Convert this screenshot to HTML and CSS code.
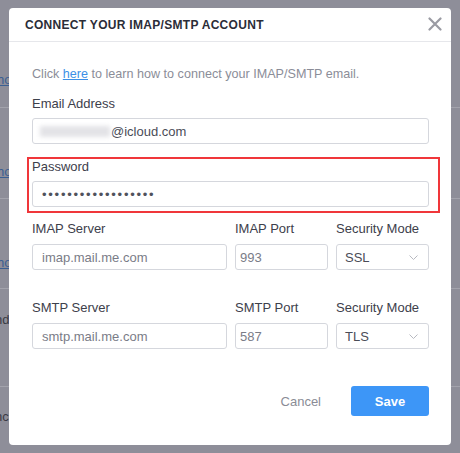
FILE: index.html
```html
<!DOCTYPE html>
<html>
<head>
<meta charset="utf-8">
<link rel="stylesheet" href="styles.css">
</head>
<body>
<div class="page">
  <div class="row r1"><span class="lnk">ho</span></div>
  <div class="row r2"><span class="lnk">ho</span></div>
  <div class="row r3"><span class="lnk">ho</span></div>
  <div class="row r4"><span class="txt">nd</span></div>
  <div class="row r5"><span class="txt">nc</span></div>
</div>
<div class="modal">
  <div class="modal-header">
    <div class="title">CONNECT YOUR IMAP/SMTP ACCOUNT</div>
    <svg class="close" width="14" height="14" viewBox="0 0 14 14"><path d="M1.5 1.5 L12.5 12.5 M12.5 1.5 L1.5 12.5" stroke="#9a9ba3" stroke-width="2.2" stroke-linecap="round" fill="none"/></svg>
  </div>
  <div class="modal-body">
    <p class="hint">Click <a class="here">here</a> to learn how to connect your IMAP/SMTP email.</p>
    <div class="field">
      <div class="label">Email Address</div>
      <div class="input email"><span class="blur"></span><span class="val">@icloud.com</span></div>
    </div>
    <div class="field highlight">
      <div class="label">Password</div>
      <div class="input pw"><span class="dots">••••••••••••••••••</span></div>
    </div>
    <div class="grid g1">
      <div class="label">IMAP Server</div>
      <div class="label">IMAP Port</div>
      <div class="label">Security Mode</div>
      <div class="input srv">imap.mail.me.com</div>
      <div class="input port">993</div>
      <div class="input sel">SSL<svg class="chev" width="9" height="5" viewBox="0 0 9 5"><path d="M0.5 0.5 L4.5 4.5 L8.5 0.5" stroke="#b7b9c0" stroke-width="1" fill="none"/></svg></div>
    </div>
    <div class="grid g2">
      <div class="label">SMTP Server</div>
      <div class="label">SMTP Port</div>
      <div class="label">Security Mode</div>
      <div class="input srv">smtp.mail.me.com</div>
      <div class="input port">587</div>
      <div class="input sel">TLS<svg class="chev" width="9" height="5" viewBox="0 0 9 5"><path d="M0.5 0.5 L4.5 4.5 L8.5 0.5" stroke="#b7b9c0" stroke-width="1" fill="none"/></svg></div>
    </div>
    <div class="actions">
      <span class="cancel">Cancel</span>
      <span class="save">Save</span>
    </div>
  </div>
</div>
</body>
</html>
```
FILE: styles.css
```css
* { box-sizing: border-box; }
html, body { margin: 0; padding: 0; }
body {
  width: 460px;
  height: 453px;
  overflow: hidden;
  background: #8e8e99;
  font-family: "Liberation Sans", Arial, sans-serif;
  font-size: 13px;
  position: relative;
}
.row {
  border-bottom: 1px solid #a3a3ac;
  font-size: 13px;
  line-height: 16px;
}
.r1 { height: 108px; padding-top: 72px; }
.r2 { height: 91px; padding-top: 56px; }
.r3 { height: 90px; padding-top: 56px; }
.r4 { height: 98px; padding-top: 23px; }
.r5 { height: 70px; padding-top: 22px; border-bottom: 0; }
.lnk {
  display: block;
  margin-left: -3px;
  color: #3a5f93;
  text-decoration: underline;
}
.txt { display: block; margin-left: -5px; color: #3a3a44; }

.modal {
  position: absolute;
  left: 9px;
  top: 8px;
  width: 442px;
  height: 437px;
  background: #fff;
  border-radius: 4px;
}
.modal-header {
  height: 34px;
  border-bottom: 1px solid #e6e7eb;
  display: flex;
  align-items: center;
  justify-content: space-between;
  padding: 0 9px 0 16px;
}
.title {
  font-weight: bold;
  font-size: 12px;
  letter-spacing: 0.3px;
  color: #2b2d38;
}
.close { display: block; margin-top: -2px; }
.modal-body { padding: 24px 22px 0 23px; }
.hint {
  margin: 0 0 14px 0;
  line-height: 16px;
  font-size: 12.6px;
  color: #8b8d98;
}
.here { color: #3d8fe6; text-decoration: underline; }
.label {
  line-height: 16px;
  color: #3d404b;
  margin-bottom: 6px;
}
.input {
  height: 26px;
  border: 1px solid #d5d7dd;
  border-radius: 3px;
  display: flex;
  align-items: center;
  padding-left: 9px;
  color: #7a7c87;
  position: relative;
}
.email { padding-left: 7px; }
.blur {
  display: block;
  width: 70px;
  height: 11px;
  background: #e3e3e7;
  filter: blur(2px);
  margin-right: 1px;
}
.email .val { color: #4a4c57; }
.pw { padding-left: 9px; }
.dots { color: #50525c; letter-spacing: 1.75px; font-size: 13px; }
.field.highlight {
  margin: 13px -11px 0 -5px;
  border: 2px solid #f0363a;
  padding: 0 9px 4px 3px;
}
.grid {
  display: grid;
  grid-template-columns: 1fr 93px 93px;
  column-gap: 8px;
}
.grid .label { margin-bottom: 7px; }
.g1 { margin-top: 8px; }
.g2 { margin-top: 30px; }
.port { padding-left: 4px; }
.sel { padding-left: 8px; color: #4a4c57; }
.chev { position: absolute; right: 10px; top: 10px; }
.actions {
  margin-top: 37px;
  display: flex;
  justify-content: flex-end;
  align-items: center;
}
.cancel {
  color: #8a8c96;
  margin-right: 30px;
}
.save {
  width: 78px;
  height: 30px;
  background: #3d96f7;
  color: #fff;
  border-radius: 3px;
  display: flex;
  align-items: center;
  justify-content: center;
  font-weight: bold;
}
```
